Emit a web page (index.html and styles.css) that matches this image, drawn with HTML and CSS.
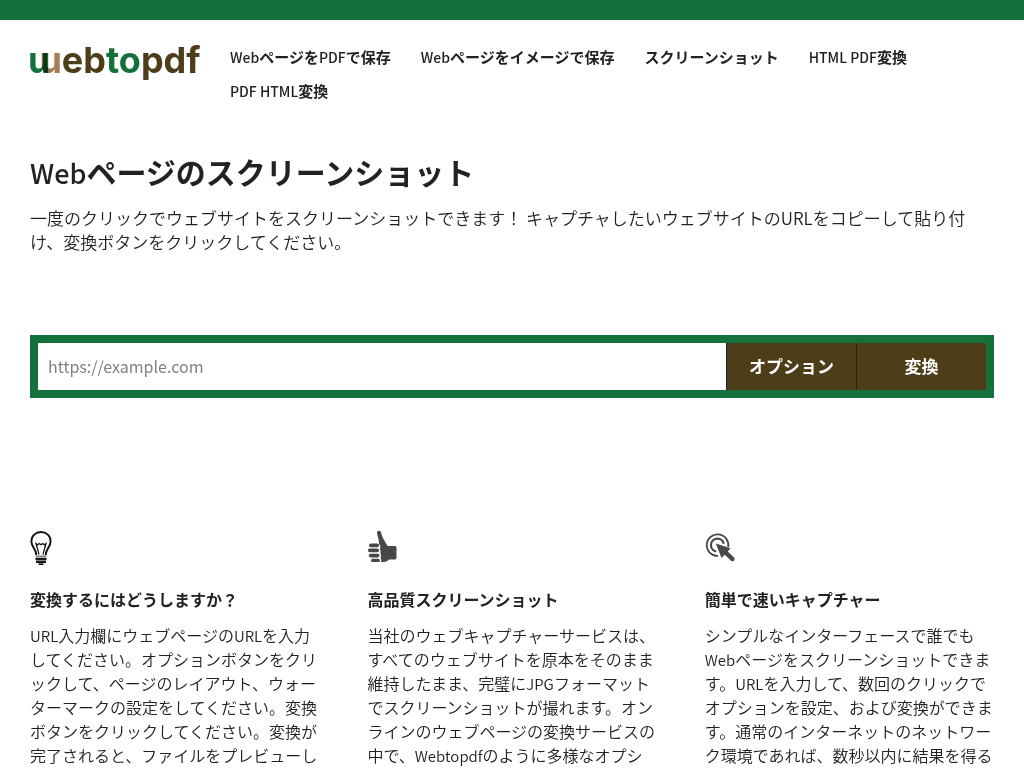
FILE: index.html
```
<!DOCTYPE html>
<html lang="ja">
<head>
<meta charset="utf-8">
<meta name="viewport" content="width=device-width, initial-scale=1">
<title>Webページのスクリーンショット</title>
<link rel="stylesheet" href="styles.css">
</head>
<body>
<header class="header">
  <a class="logo" href="#" aria-label="webtopdf"><span class="logo-u green">u</span><span class="logo-u tan">u</span><span class="brown">eb</span><span class="green">to</span><span class="brown">pdf</span></a>
  <nav class="nav">
    <a href="#"><span class="latin">Web</span>ページを<span class="latin">PDF</span>で保存</a>
    <a href="#"><span class="latin">Web</span>ページをイメージで保存</a>
    <a href="#">スクリーンショット</a>
    <a href="#"><span class="latin">HTML PDF</span>変換</a>
    <a href="#"><span class="latin">PDF HTML</span>変換</a>
  </nav>
</header>
<main class="main">
  <h1 class="title"><span class="latin">Web</span>ページのスクリーンショット</h1>
  <p class="intro">一度のクリックでウェブサイトをスクリーンショットできます！ キャプチャしたいウェブサイトのURLをコピーして貼り付け、変換ボタンをクリックしてください。</p>
  <form class="form">
    <input class="url" type="text" placeholder="https://example.com" aria-label="URL">
    <button class="btn" type="button">オプション</button>
    <button class="btn" type="button">変換</button>
  </form>
  <section class="features">
    <article class="feature">
      <svg class="icon" width="24" height="36" viewBox="0 0 24 36" fill="none" stroke="#111" aria-hidden="true">
        <path stroke-width="1.900" d="M6.300 25C6.300 19 1.400 17 1.400 11.500C1.400 6 5.600 2 11 2S20.600 6 20.600 11.500C20.600 17 15.700 19 15.700 25"/>
        <path stroke-width="1.200" d="M9 24.500L6 13.500L7.700 14.700L9.300 13.500L11 14.700L12.700 13.500L14.400 14.700L16 13.500L13 24.500"/>
        <path stroke="#888" stroke-width="2.200" d="M5.500 26.500H16.500"/>
        <path stroke-width="1.800" d="M5.500 29H16.500M6 32H16"/>
        <path stroke="#888" stroke-width="1.200" d="M6 30.500H16"/>
        <path stroke-width="1.600" d="M8.500 34.200H13.500"/>
      </svg>
      <h2>変換するにはどうしますか？</h2>
      <p><span class="latin">URL</span>入力欄にウェブページの<span class="latin">URL</span>を入力してください。オプションボタンをクリックして、ページのレイアウト、ウォーターマークの設定をしてください。変換ボタンをクリックしてください。変換が完了されると、ファイルをプレビューしてダウンロードできます。</p>
    </article>
    <article class="feature">
      <svg class="icon" width="30" height="36" viewBox="0 0 30 36" fill="#484848" aria-hidden="true">
        <path d="M10 2.300C10.500 .3 13.300 .3 14 2.300C15 8 18.500 12 20.500 16H28Q29.500 16 29.500 18V27.500Q29.500 29.500 28 29.500H22C20 32 17 32 14 32C14.700 30 14.300 29 13.500 28C14.500 26 14 24.500 13.300 23.500C14 21.500 13.500 20 12.700 19C13.800 17.500 13.500 15 12 14C12.500 10 10 6 10 2.300Z"/>
        <rect x="2" y="13.500" width="10" height="3.700" rx="1.800"/><rect x="1" y="18.500" width="11" height="3.700" rx="1.800"/><rect x="1.800" y="23.700" width="10.700" height="3.700" rx="1.800"/><rect x="4" y="28.800" width="9" height="3.200" rx="1.600"/>
      </svg>
      <h2>高品質スクリーンショット</h2>
      <p>当社のウェブキャプチャーサービスは、すべてのウェブサイトを原本をそのまま維持したまま、完璧に<span class="latin">JPG</span>フォーマットでスクリーンショットが撮れます。オンラインのウェブページの変換サービスの中で、<span class="latin">Webtopdf</span>のように多様なオプションを提供するサービスはありません。</p>
    </article>
    <article class="feature">
      <svg class="icon" width="30" height="36" viewBox="0 0 30 36" fill="none" stroke="#484848" aria-hidden="true">
        <path stroke-width="1.800" d="M13 25.900A10.800 10.800 0 1 1 23.200 17"/>
        <path stroke-width="2.200" d="M11.200 21.500A6.500 6.500 0 1 1 18.800 13.800"/>
        <path fill="#484848" stroke="none" d="M10.800 13.500L25.500 18.300L22.800 21.500L29 27.500C30.800 29.500 28 32.500 26 30.800L19.800 24.800L16.500 28Z"/>
      </svg>
      <h2>簡単で速いキャプチャー</h2>
      <p>シンプルなインターフェースで誰でも<span class="latin">Web</span>ページをスクリーンショットできます。<span class="latin">URL</span>を入力して、数回のクリックでオプションを設定、および変換ができます。通常のインターネットのネットワーク環境であれば、数秒以内に結果を得ることができます。</p>
    </article>
  </section>
</main>
</body>
</html>
```
FILE: styles.css
```
* { box-sizing: border-box; }
body {
  margin: 0;
  border-top: 20px solid #14713b;
  background: #fff;
  color: #222;
  font: 350 16px/24px "Noto Sans CJK JP", sans-serif;
}
.latin { line-height: 1; }
.header {
  display: flex;
  align-items: flex-start;
  gap: 30px;
  padding: 20px 30px 0 28px;
}
.logo {
  flex: 0 0 172px;
  min-width: 0;
  display: flex;
  font: 700 36px/40px Inter, sans-serif;
  text-decoration: none;
  white-space: nowrap;
}
.logo-u { mix-blend-mode: multiply; }
.logo-u + .logo-u { margin-left: -11px; }
.green { color: #14713b; }
.tan { color: #a67c52; }
.brown { color: #4d3e19; }
.nav {
  display: flex;
  flex: 1;
  flex-wrap: wrap;
  gap: 0 30px;
}
.nav a {
  color: #222;
  font-size: 15px;
  font-weight: 700;
  line-height: 34px;
  text-decoration: none;
}
.nav .latin {
  font-size: 14px;
  font-weight: 500;
}
.main { padding: 39px 30px 0; }
.title {
  margin: 0;
  font-size: 30px;
  font-weight: 700;
  line-height: 48px;
}
.title .latin {
  font-size: 27px;
  font-weight: 500;
}
.intro {
  margin: 11px 0 81px;
  font-size: 17px;
}
.form {
  display: flex;
  border: 8px solid #14713b;
}
.url {
  flex: 1;
  min-width: 0;
  height: 47px;
  padding: 0 10px 2px;
  border: 0;
  font: 400 16px "Noto Sans CJK JP", sans-serif;
}
.url::placeholder { color: #808080; }
.btn {
  width: 130px;
  padding: 0 0 2px;
  border: 0;
  border-left: 1px solid #222;
  background: #4d3e19;
  color: #fff;
  font: 700 17px "Noto Sans CJK JP", sans-serif;
}
.features {
  display: grid;
  grid-template-columns: repeat(3, 1fr);
  column-gap: 5%;
  margin-top: 132px;
}
.icon { display: block; }
.feature h2 {
  margin: 21px 0 12px;
  font-size: 16px;
  font-weight: 700;
  line-height: 24px;
}
.feature p { margin: 0; }
.feature .latin { font-size: 15px; }
```
